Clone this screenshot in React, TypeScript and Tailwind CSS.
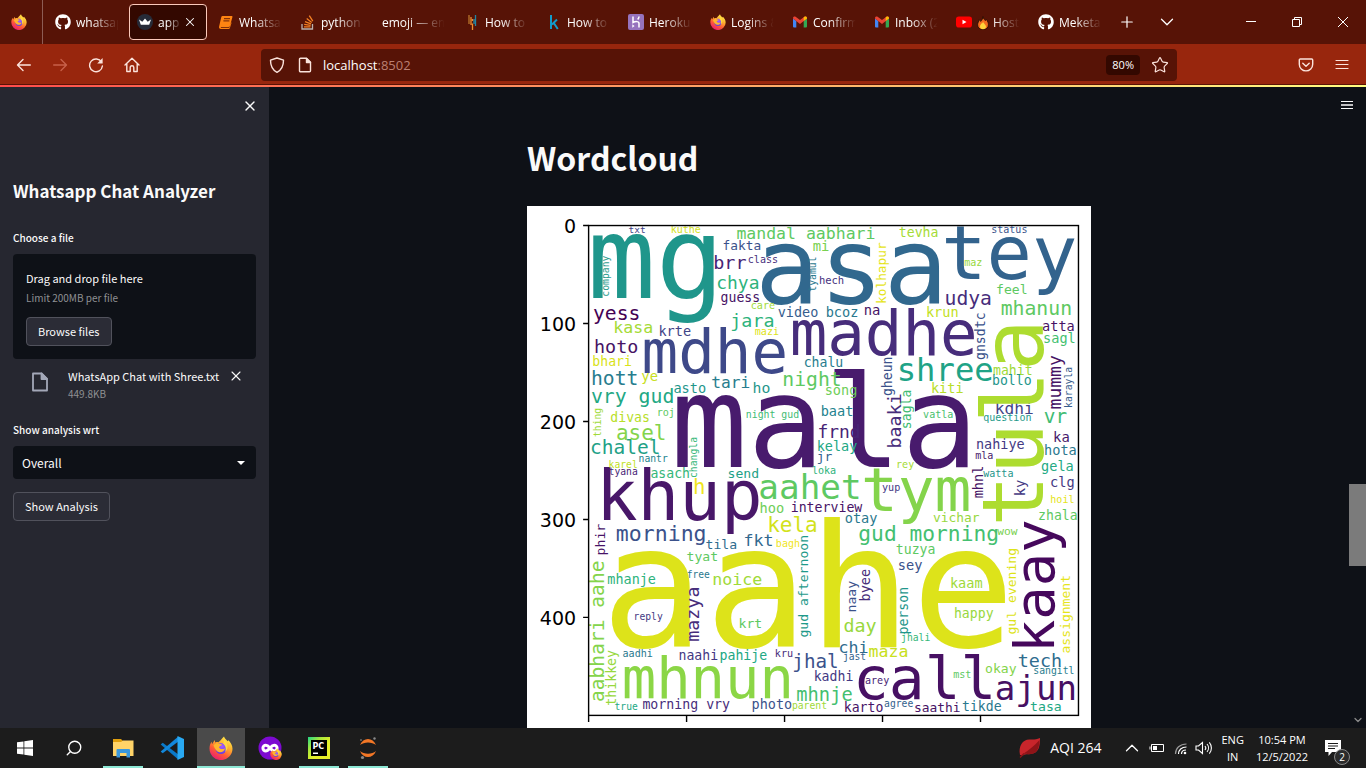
import type { ReactNode } from "react";
import { ChevronDown, ChevronUp, Plus, Search, Star, X } from "lucide-react";
import { FaGithub } from "react-icons/fa";

type Word = [text: string, x: number, y: number, length: number, color: string];

/* Horizontal words: left edge, baseline, drawn length. */
const acrossWords: Word[] = [
  ["aahe", 611, 646, 393, "#dde31a"],
  ["mala", 678, 467, 292, "#481b6d"],
  ["asa", 761, 303, 180, "#31688e"],
  ["mg", 594, 298, 123, "#1f968b"],
  ["tey", 945, 279, 127, "#33638d"],
  ["khup", 600, 519, 158, "#481769"],
  ["madhe", 793, 355, 180, "#472d7b"],
  ["mdhe", 645, 373, 139, "#3e4989"],
  ["tym", 864, 510, 103, "#84d44b"],
  ["mhnun", 625, 697, 165, "#8bd646"],
  ["call", 856, 698, 136, "#471063"],
  ["txt", 629, 233, 16, "#414487"],
  ["kuthe", 671, 233, 29, "#d2e21b"],
  ["mandal aabhari", 737, 239, 137, "#5ec962"],
  ["fakta", 723, 250, 37, "#3b528b"],
  ["mi", 813, 251, 15, "#7ad151"],
  ["brr", 714, 269, 31, "#482475"],
  ["class", 748, 263, 29, "#472f7d"],
  ["chya", 717, 289, 41, "#2eb37c"],
  ["guess", 721, 302, 38, "#471365"],
  ["care", 751, 309, 23, "#a0da39"],
  ["hech", 819, 284, 24, "#46327e"],
  ["yess", 594, 320, 45, "#440154"],
  ["video", 778, 317, 39, "#365d8d"],
  ["bcoz", 826, 317, 31, "#2a788e"],
  ["jara", 731, 327, 42, "#2eb37c"],
  ["kasa", 614, 333, 38, "#a5db36"],
  ["krte", 659, 336, 31, "#414487"],
  ["mazi", 755, 335, 23, "#dde318"],
  ["hoto", 595, 353, 42, "#471365"],
  ["bhari", 593, 366, 38, "#d8e219"],
  ["tevha", 899, 237, 38, "#a5db36"],
  ["status", 991, 233, 35, "#3a548c"],
  ["maz", 964, 266, 17, "#98d83e"],
  ["na", 864, 315, 15, "#471365"],
  ["krun", 926, 317, 31, "#c2df23"],
  ["udya", 945, 305, 45, "#472d7b"],
  ["feel", 996, 294, 30, "#5ec962"],
  ["mhanun", 1001, 315, 69, "#5ec962"],
  ["atta", 1042, 331, 31, "#471365"],
  ["sagl", 1043, 343, 31, "#44bf70"],
  ["shree", 898, 381, 93, "#20a386"],
  ["mahit", 993, 375, 38, "#a0da39"],
  ["bollo", 992, 385, 38, "#1f968b"],
  ["chalu", 804, 367, 38, "#287d8e"],
  ["hott", 592, 385, 45, "#287d8e"],
  ["ye", 642, 381, 15, "#c8e020"],
  ["tari", 712, 388, 37, "#287d8e"],
  ["night", 783, 386, 57, "#5ec962"],
  ["kiti", 931, 393, 31, "#b8de29"],
  ["kdhi", 995, 414, 37, "#414487"],
  ["question", 983, 421, 47, "#1f9a8a"],
  ["vr", 1044, 423, 21, "#3fbc73"],
  ["ka", 1053, 442, 15, "#481a6c"],
  ["hota", 1044, 455, 31, "#2a788e"],
  ["nahiye", 976, 449, 47, "#443983"],
  ["mla", 975, 459, 17, "#481a6c"],
  ["watta", 983, 477, 29, "#1f968b"],
  ["gela", 1041, 471, 31, "#24aa83"],
  ["clg", 1050, 487, 23, "#443983"],
  ["hoil", 1050, 502, 23, "#e5e419"],
  ["zhala", 1038, 519, 38, "#5ec962"],
  ["song", 825, 395, 31, "#6ece58"],
  ["baat", 821, 416, 31, "#25838e"],
  ["frnd", 818, 438, 41, "#482475"],
  ["kelay", 817, 451, 39, "#22a884"],
  ["jr", 817, 461, 14, "#33638d"],
  ["loka", 812, 474, 23, "#2eb37c"],
  ["vatla", 923, 418, 29, "#4ac16d"],
  ["rey", 896, 468, 17, "#a5db36"],
  ["yup", 882, 491, 17, "#443983"],
  ["aahet", 760, 498, 99, "#5ec962"],
  ["interview", 791, 511, 70, "#481467"],
  ["hoo", 760, 512, 23, "#6ece58"],
  ["otay", 845, 522, 31, "#2a788e"],
  ["vichar", 933, 521, 45, "#98d83e"],
  ["gud morning", 859, 540, 138, "#44bf70"],
  ["wow", 997, 534, 19, "#7ad151"],
  ["tuzya", 896, 553, 38, "#5ec962"],
  ["kela", 768, 531, 48, "#d2e21b"],
  ["fkt", 744, 545, 28, "#31688e"],
  ["bagh", 776, 546, 23, "#f0e51d"],
  ["tila", 706, 548, 30, "#2f6c8e"],
  ["morning", 617, 540, 88, "#3b528b"],
  ["asach", 651, 478, 38, "#35b779"],
  ["h", 694, 494, 10, "#f0e51d"],
  ["send", 728, 478, 30, "#1fa187"],
  ["karel", 609, 468, 28, "#c0df25"],
  ["tyana", 609, 475, 28, "#482475"],
  ["nantr", 639, 462, 28, "#25838e"],
  ["chalel", 591, 454, 68, "#1fa187"],
  ["asel", 617, 440, 48, "#84d44b"],
  ["divas", 611, 422, 38, "#b8de29"],
  ["roj", 657, 416, 17, "#5ec962"],
  ["vry gud", 592, 403, 81, "#22a884"],
  ["asto", 674, 393, 31, "#1f968b"],
  ["ho", 753, 393, 16, "#1f968b"],
  ["night gud", 746, 418, 52, "#3fbc73"],
  ["tyat", 687, 560, 30, "#5ec962"],
  ["mhanje", 608, 583, 47, "#2eb37c"],
  ["free", 687, 577, 22, "#2a788e"],
  ["noice", 713, 584, 48, "#a0da39"],
  ["krt", 739, 627, 22, "#5ec962"],
  ["reply", 634, 619, 28, "#443983"],
  ["aadhi", 623, 656, 29, "#2a788e"],
  ["naahi", 679, 659, 38, "#443983"],
  ["pahije", 720, 659, 46, "#22a884"],
  ["kru", 775, 656, 17, "#472d7b"],
  ["jhal", 793, 667, 44, "#3b528b"],
  ["kadhi", 814, 680, 38, "#443983"],
  ["mhnje", 797, 700, 54, "#44bf70"],
  ["true", 615, 709, 22, "#22a884"],
  ["morning vry", 643, 708, 86, "#472d7b"],
  ["photo", 752, 708, 39, "#3b528b"],
  ["parent", 792, 708, 34, "#a0da39"],
  ["sey", 898, 569, 23, "#3b528b"],
  ["jhali", 901, 640, 28, "#35b779"],
  ["kaam", 950, 587, 31, "#a0da39"],
  ["happy", 954, 617, 38, "#98d83e"],
  ["day", 844, 631, 31, "#98d83e"],
  ["chi", 839, 652, 28, "#2f6c8e"],
  ["jast", 843, 659, 22, "#33638d"],
  ["maza", 869, 656, 38, "#c8e020"],
  ["arey", 865, 683, 23, "#482475"],
  ["mst", 953, 677, 17, "#5ec962"],
  ["okay", 985, 672, 30, "#84d44b"],
  ["tech", 1018, 666, 42, "#2f6c8e"],
  ["sangitl", 1033, 673, 40, "#287d8e"],
  ["ajun", 996, 699, 78, "#471063"],
  ["tasa", 1030, 710, 30, "#22a884"],
  ["tikde", 962, 710, 38, "#2a788e"],
  ["saathi", 914, 711, 45, "#471365"],
  ["agree", 884, 706, 28, "#33638d"],
  ["karto", 844, 711, 38, "#481467"],
];

/* Words that read upwards: baseline x, lower end, drawn length. */
const upwardWords: Word[] = [
  ["tula", 1042, 521, 197, "#addc30"],
  ["kaay", 1053, 649, 127, "#46085c"],
  ["company", 609, 296, 40, "#2c9c8e"],
  ["tyamul", 815, 291, 34, "#2a788e"],
  ["kolhapur", 885, 303, 60, "#e5e419"],
  ["gnsdtc", 984, 359, 46, "#3b528b"],
  ["mummy", 1060, 408, 52, "#471365"],
  ["karayla", 1071, 407, 40, "#365d8d"],
  ["gheun", 891, 395, 38, "#3b528b"],
  ["mhnl", 982, 497, 31, "#471365"],
  ["ky", 1024, 495, 15, "#443983"],
  ["sagla", 910, 428, 38, "#3fbc73"],
  ["baaki", 900, 447, 53, "#472d7b"],
  ["changla", 697, 477, 40, "#35b779"],
  ["thing", 601, 436, 28, "#a0da39"],
  ["phir", 605, 554, 30, "#481467"],
  ["mazya", 699, 640, 53, "#472d7b"],
  ["gud afternoon", 808, 636, 101, "#1f9a8a"],
  ["aabhari aahe", 604, 700, 139, "#84d44b"],
  ["thikkey", 616, 704, 54, "#98d83e"],
  ["naay", 855, 611, 30, "#3b528b"],
  ["byee", 869, 600, 31, "#472d7b"],
  ["person", 907, 633, 46, "#1f968b"],
  ["gul evening", 1015, 633, 85, "#dde318"],
  ["assignment", 1069, 652, 77, "#e5e419"],
];

const sizeOf = (text: string, length: number) => length / (0.602 * text.length - 0.12);

function WordcloudFigure() {
  const ticks = [0, 100, 200, 300, 400];
  return (
    <svg
      viewBox="527 206 563 560"
      role="img"
      aria-label="Wordcloud of the chat"
      className="block w-full bg-white"
    >
      {acrossWords.map(([text, x, y, length, color]) => {
        const size = sizeOf(text, length);
        return (
          <text key={text} x={x - size * 0.06} y={y} fontSize={size} fill={color} fontFamily="DejaVu Sans Mono, monospace">
            {text}
          </text>
        );
      })}
      {upwardWords.map(([text, x, y, length, color]) => {
        const size = sizeOf(text, length);
        return (
          <text key={text} transform={`translate(${x} ${y + size * 0.06}) rotate(-90)`} fontSize={size} fill={color} fontFamily="DejaVu Sans Mono, monospace">
            {text}
          </text>
        );
      })}
      <rect x="588.5" y="225.5" width="489" height="489" fill="none" stroke="#000" strokeWidth="1.4" />
      {ticks.map((t) => {
        const at = t * 0.978;
        return (
          <g key={t} stroke="#000" strokeWidth="1.4">
            <path d={`M583 ${225.5 + at}h5.5M${588.5 + at} 715v6`} />
            <text x="576" y={233 + at} textAnchor="end" fontSize="19" stroke="none" fontFamily="DejaVu Sans, sans-serif">
              {t}
            </text>
          </g>
        );
      })}
    </svg>
  );
}

function FirefoxIcon({ className = "size-4" }: { className?: string }) {
  return (
    <svg viewBox="0 0 24 24" className={className} aria-hidden="true">
      <defs>
        <linearGradient id="fxFlame" x1=".8" y1="0" x2=".2" y2="1">
          <stop offset="0" stopColor="#fff44f" />
          <stop offset=".35" stopColor="#ffb02e" />
          <stop offset=".65" stopColor="#ff5a36" />
          <stop offset="1" stopColor="#e6127d" />
        </linearGradient>
        <radialGradient id="fxGlobe" cx=".6" cy=".3" r=".8">
          <stop offset="0" stopColor="#a35bff" />
          <stop offset="1" stopColor="#5b3bd6" />
        </radialGradient>
      </defs>
      <path fill="url(#fxFlame)" d="M15 .5c.5 2 2.200 3 3.700 4.800l.8-1c2 2 4 5.200 4 8.400A11.500 11.500 0 1 1 .5 12.500c0-3 .9-5 2.200-6.700L3 8.200 5.700 4l.5 2.600c1-.5 2-.6 3.200-.4C11 5.500 12.500 3 15 .5z" />
      <circle cx="12" cy="12.500" r="5.500" fill="url(#fxGlobe)" />
      <path fill="#ffb62e" d="M4.500 9.500C6 7 9 7 10.500 7.800 12 8 13 8.500 13 9c-1 1-2.500 1-3 2 .5 2.500 4 2.500 6 1.200-.5 3-3 4.300-5.500 4-3-.4-4.500-3-6-6.700z" />
      <path fill="#ffd83f" d="M15 3c2 2.500 3.500 4.500 3.500 8 0 2-.8 3.700-2.300 5 1-3 .8-6-2.200-8.500 1-1 1.300-3 1-4.500z" />
    </svg>
  );
}

function CrownIcon() {
  return (
    <svg viewBox="0 0 16 16" className="size-4" aria-hidden="true">
      <circle cx="8" cy="8" r="8" fill="#262b38" />
      <path fill="#fff" d="M2 5.500l3.300 2.200L8 4.500l2.700 3.200L14 5.500l-1.800 5.300H3.800z" />
    </svg>
  );
}

function BookIcon() {
  return (
    <svg viewBox="0 0 16 16" className="size-4" aria-hidden="true">
      <path fill="#ff8412" d="M4.500 2h9c.8 0 1.100.5.9 1.200l-2.400 8.600c-.2.700-.7 1.200-1.400 1.200H3.300c-.6 0-.7.800 0 .8h8L13 9l.8-1-2 6.300c-.2.500-.6.700-1.100.7H3c-1.500 0-2.300-1-1.900-2.400L3.300 3c.2-.6.600-1 1.200-1z" />
      <path stroke="#571306" strokeWidth=".9" d="M6 4.700h6M5.400 6.900h6" />
    </svg>
  );
}

function StackIcon() {
  return (
    <svg viewBox="0 0 16 16" className="size-4" fill="none" strokeWidth="1.300" aria-hidden="true">
      <path stroke="#b9b3ae" d="M2 10v5h10.500v-5" />
      <path stroke="#f48024" d="M4 12.800h6.500M4.200 10.400l6.400 1M5 7.700l6 2.200M6.700 4.600l5 4M9.300 1.600l3.500 5.600" />
    </svg>
  );
}

function BarsIcon() {
  return (
    <svg viewBox="0 0 16 16" className="size-4" strokeWidth="1.300" aria-hidden="true">
      <path stroke="#b9752a" d="M5 1v9" />
      <path stroke="#f08c2e" d="M7 3v8M8.500 5v2M8.500 9.500V16" />
      <path stroke="#2387a5" d="M11.500 1v11M10 5v5" />
    </svg>
  );
}

function KaggleIcon() {
  return (
    <svg viewBox="0 0 16 16" className="size-4" fill="none" stroke="#139bca" strokeWidth="2" aria-hidden="true">
      <path d="M5 1v14M11 5.500L6 10.500M7.800 9l4 6" />
    </svg>
  );
}

function HerokuIcon() {
  return (
    <svg viewBox="0 0 16 16" className="size-4" fill="none" aria-hidden="true">
      <rect width="16" height="16" rx="2" fill="#9673bd" />
      <path stroke="#fff" strokeWidth="1.500" d="M5 2.500v6c2-1 6-1.600 6 .8v4.200M11 2.500c0 1.300-.5 2-1.300 3" />
      <path fill="#fff" d="M4.300 10.300L6.600 12l-2.300 1.800z" />
    </svg>
  );
}

function GmailIcon() {
  return (
    <svg viewBox="0 0 16 16" className="size-4" aria-hidden="true">
      <path fill="#4285f4" d="M1 4.500l3.300 2.500v6.500H2a1 1 0 0 1-1-1z" />
      <path fill="#34a853" d="M11.700 7L15 4.500v8a1 1 0 0 1-1 1h-2.300z" />
      <path fill="#ea4335" d="M1 4c0-1.500 1.600-2 2.600-1.200L8 6.100l4.400-3.300C13.400 2 15 2.500 15 4v.6L8 9.900 1 4.600z" />
      <path fill="#fbbc04" d="M11.700 3.300l.7-.5C13.400 2 15 2.500 15 4v.6L11.700 7z" />
    </svg>
  );
}

function YoutubeIcon() {
  return (
    <svg viewBox="0 0 16 16" className="size-4" aria-hidden="true">
      <rect y="2.500" width="16" height="11" rx="2.800" fill="#f00" />
      <path fill="#fff" d="M6.500 5.700L10.500 8l-4 2.300z" />
    </svg>
  );
}

function FlameIcon() {
  return (
    <svg viewBox="0 0 12 14" className="h-3.5 w-3 shrink-0" aria-hidden="true">
      <path fill="#f36c1e" stroke="#1c0a02" strokeWidth=".8" d="M6 .6c.2 2 1.300 2.700 2.300 4L9.400 3.500c1.500 2 2 3.500 2 5.300 0 3-2.400 4.800-5.400 4.800S.6 11.800.6 8.800C.6 6.500 2 5.800 2 3.600c1 .4 1.400 1 1.700 1.800C5 4.200 5.800 2.600 6 .6z" />
      <path fill="#ffd43a" d="M6 5.500c.2 2 3 3 3 5 0 1.700-1.300 2.700-3 2.700s-3-1-3-2.700c0-1.600 1-1.700 1.200-3 .8.300 1.600-.8 1.800-2z" />
    </svg>
  );
}

const github = <FaGithub className="size-4 text-white" />;

const tabs: { icon?: ReactNode; title: string; flame?: boolean; active?: boolean }[] = [
  { icon: github, title: "whatsapp" },
  { icon: <CrownIcon />, title: "app · Streamlit", active: true },
  { icon: <BookIcon />, title: "Whatsapp" },
  { icon: <StackIcon />, title: "python -" },
  { title: "emoji — emoji" },
  { icon: <BarsIcon />, title: "How to" },
  { icon: <KaggleIcon />, title: "How to" },
  { icon: <HerokuIcon />, title: "Heroku" },
  { icon: <FirefoxIcon />, title: "Logins &" },
  { icon: <GmailIcon />, title: "Confirm" },
  { icon: <GmailIcon />, title: "Inbox (2" },
  { icon: <YoutubeIcon />, title: "Host", flame: true },
  { icon: github, title: "Meketa" },
];

function TabStrip() {
  return (
    <header className="flex h-11 shrink-0 items-center bg-[#571306] text-white">
      <button aria-label="Firefox" className="mr-1 flex h-11 w-[43px] shrink-0 items-center justify-center border-r border-[#8d5c54] pr-1">
        <FirefoxIcon />
      </button>
      <nav className="flex" aria-label="Open tabs">
        {tabs.map((tab, i) => (
          <div
            key={i}
            className={
              tab.active
                ? "mr-[3px] flex h-9 w-[78px] shrink-0 items-center rounded border border-[#fbc9bb] bg-[#330800] pr-[9px] pl-[7px]"
                : "flex h-9 w-[82px] shrink-0 items-center px-2"
            }
          >
            {tab.icon && <span className="mr-[5px] shrink-0">{tab.icon}</span>}
            <a
              href="#"
              className="flex min-w-0 flex-1 items-center gap-1 overflow-hidden pt-px text-xs leading-4 whitespace-nowrap [mask-image:linear-gradient(to_right,black_35%,transparent_95%)]"
            >
              {tab.flame && <FlameIcon />}
              {tab.title}
            </a>
            {tab.active && (
              <button aria-label="Close tab">
                <X className="size-3.5" strokeWidth={1.8} />
              </button>
            )}
          </div>
        ))}
      </nav>
      <button aria-label="New tab" className="ml-[6px]">
        <Plus className="size-[18px]" strokeWidth={1.6} />
      </button>
      <button aria-label="List all tabs" className="ml-5">
        <ChevronDown className="size-[22px]" strokeWidth={1.4} />
      </button>
      <div className="ml-auto flex">
        <button aria-label="Minimise" className="flex w-[46px] justify-center">
          <svg viewBox="0 0 16 16" className="size-4" stroke="currentColor" aria-hidden="true">
            <path d="M3 7.500h10" />
          </svg>
        </button>
        <button aria-label="Restore" className="flex w-[46px] justify-center">
          <svg viewBox="0 0 16 16" className="size-4" fill="none" stroke="currentColor" aria-hidden="true">
            <path d="M3.500 5.500h7v7h-7zM5.500 5.500v-2h7v7h-2" />
          </svg>
        </button>
        <button aria-label="Close" className="flex w-[46px] justify-center">
          <svg viewBox="0 0 16 16" className="size-4" stroke="currentColor" aria-hidden="true">
            <path d="M3 3l10 10M13 3L3 13" />
          </svg>
        </button>
      </div>
    </header>
  );
}

function Glyph({ children, className = "size-4" }: { children: ReactNode; className?: string }) {
  return (
    <svg
      viewBox="0 0 16 16"
      className={className}
      fill="none"
      stroke="currentColor"
      strokeWidth="1.400"
      strokeLinecap="round"
      strokeLinejoin="round"
      aria-hidden="true"
    >
      {children}
    </svg>
  );
}

function Toolbar() {
  return (
    <div className="flex h-10 shrink-0 items-center bg-[#98260d] px-4 pt-px text-[#fbe3dc]">
      <div className="flex gap-5">
        <button aria-label="Back">
          <Glyph>
            <path d="M14.300 8H1.700M7 2.500L1.500 8 7 13.500" />
          </Glyph>
        </button>
        <button aria-label="Forward" className="text-[#c7604a]">
          <Glyph>
            <path d="M1.700 8h12.600M9 2.500L14.500 8 9 13.500" />
          </Glyph>
        </button>
        <button aria-label="Reload">
          <Glyph>
            <path d="M13.500 5A6.400 6.400 0 1 0 14.400 9" />
            <path d="M14.600 1v5.500H9.200z" fill="currentColor" stroke="none" />
          </Glyph>
        </button>
        <button aria-label="Home">
          <Glyph>
            <path d="M1 8l7-6.700L15 8M2.800 6.800v7.700h3.400v-4a1.800 1.800 0 0 1 3.600 0v4h3.400V6.800" />
          </Glyph>
        </button>
      </div>
      <div className="mr-[121px] ml-[121px] flex h-8 min-w-0 flex-1 items-center rounded bg-[#571306] px-2">
        <Glyph>
          <path d="M8 1l6.500 2.200C14.500 9 12.500 13 8 15.300 3.500 13 1.500 9 1.500 3.200z" />
        </Glyph>
        <Glyph className="ml-3 size-4">
          <path d="M2.500 2.300a1 1 0 0 1 1-1H9.500l4 4v8.400a1 1 0 0 1-1 1h-9a1 1 0 0 1-1-1z" />
          <path d="M9.500 1.500v4h4z" fill="currentColor" />
        </Glyph>
        <label htmlFor="address" className="sr-only">Address</label>
        <div className="relative ml-2.5 min-w-0 flex-1 text-[13px] leading-5">
          <input id="address" defaultValue="localhost:8502" className="w-full bg-transparent text-transparent outline-none" />
          <span aria-hidden="true" className="pointer-events-none absolute inset-0 text-white">
            localhost<span className="text-[#bb8073]">:8502</span>
          </span>
        </div>
        <button className="rounded bg-[#330800] px-[6px] text-[11px] leading-5 text-white">80%</button>
        <button aria-label="Bookmark" className="ml-[11px]">
          <Star className="size-[18px]" strokeWidth={1.6} />
        </button>
      </div>
      <button aria-label="Save to Pocket">
        <Glyph>
          <path d="M2.300 2h11.400a1 1 0 0 1 1 1v4.200a6.700 6.700 0 0 1-13.400 0V3a1 1 0 0 1 1-1zM4.800 6.200L8 9.300l3.200-3.100" />
        </Glyph>
      </button>
      <button aria-label="Application menu" className="ml-5">
        <Glyph>
          <path d="M2 3.500h12M2 7.500h12M2 11.500h12" strokeWidth="1.200" />
        </Glyph>
      </button>
    </div>
  );
}

function Sidebar() {
  return (
    <aside className="flex w-[269px] shrink-0 flex-col bg-[#262730] px-[13px] text-[#fafafa]">
      <button aria-label="Close sidebar" className="-mr-[2px] mt-[11px] self-end">
        <X className="size-4" strokeWidth={2} />
      </button>
      <h1 className="mt-[65px] text-[17px] leading-6 font-bold">Whatsapp Chat Analyzer</h1>
      <label htmlFor="chat-file" className="mt-[27px] text-[10px] leading-4 font-medium">Choose a file</label>
      <section className="mt-2 rounded bg-[#0e1117] p-[13px]">
        <p className="text-[11px] leading-[22px]">Drag and drop file here</p>
        <p className="text-[10px] leading-[18px] text-[#8f9093]">Limit 200MB per file</p>
        <input id="chat-file" type="file" className="hidden" />
        <button className="mt-[10px] block rounded border border-[#51525c] bg-[#2b2c36] px-[11px] text-[11px] leading-[27px]">Browse files</button>
      </section>
      <div className="mt-[7px] flex">
        <svg viewBox="0 0 20 20" className="mt-[6px] ml-[17px] size-5" fill="none" stroke="#a3a8b8" strokeWidth="1.800" strokeLinejoin="round" aria-hidden="true">
          <path d="M3 1.500h8.500l5.500 5.500v11.500H3z" />
          <path d="M11.500 1.500V7H17z" fill="#a3a8b8" />
        </svg>
        <div className="ml-[18px] w-[157px]">
          <p className="text-[11px] leading-5 whitespace-nowrap">WhatsApp Chat with Shree.txt</p>
          <p className="text-[10px] leading-4 text-[#8f9093]">449.8KB</p>
        </div>
        <button aria-label="Remove file" className="ml-[3px] flex h-5 items-center">
          <X className="size-4" strokeWidth={1.6} />
        </button>
      </div>
      <label htmlFor="analysis" className="mt-5 text-[10px] leading-4 font-medium">Show analysis wrt</label>
      <div className="relative mt-2">
        <select id="analysis" className="h-[33px] w-full appearance-none rounded bg-[#0e1117] px-[9px] text-[12px] leading-5">
          <option>Overall</option>
        </select>
        <svg viewBox="0 0 8 4" className="pointer-events-none absolute top-[15px] right-[11px] h-1 w-2" aria-hidden="true">
          <path fill="#fff" d="M0 0h8L4 4z" />
        </svg>
      </div>
      <button className="mt-[13px] self-start rounded border border-[#51525c] bg-[#2b2c36] px-[11px] text-[11px] leading-[27px]">Show Analysis</button>
    </aside>
  );
}

function TaskButton({ label, running, active, children }: { label: string; running?: boolean; active?: boolean; children: ReactNode }) {
  return (
    <button
      aria-label={label}
      className={active ? "relative flex h-10 w-12 items-center justify-center bg-[#4a4a4a]" : "relative flex h-10 w-12 items-center justify-center"}
    >
      {children}
      {running && <span className={active ? "absolute bottom-0 h-[2px] w-12 bg-[#8de8d5]" : "absolute bottom-0 h-[2px] w-10 bg-[#8de8d5]"} />}
    </button>
  );
}

function Taskbar() {
  return (
    <footer className="flex h-10 shrink-0 items-center bg-[#1c1c1c] text-xs leading-4 text-white">
      <div className="flex gap-px pl-px">
        <TaskButton label="Start">
          <svg viewBox="0 0 16 16" className="size-4" fill="#fff" aria-hidden="true">
            <path d="M0 2.300l6.500-.9v6.200H0zM7.300 1.300L16 0v7.600H7.300zM0 8.400h6.500v6.200L0 13.700zM7.300 8.400H16V16l-8.700-1.300z" />
          </svg>
        </TaskButton>
        <TaskButton label="Search">
          <Search className="size-[18px] -scale-x-100" strokeWidth={1.8} />
        </TaskButton>
        <TaskButton label="File Explorer" running>
          <svg viewBox="0 0 24 24" className="size-6" aria-hidden="true">
            <path fill="#e09f0e" d="M2 3h8l2 2v3H2z" />
            <path fill="#ffd368" d="M2 6l8 0 2-1.500h10.500V20H2z" />
            <path fill="#3b98dc" d="M5.500 14a1 1 0 0 1 1-1h11.500a1 1 0 0 1 1 1v7.500h-3.500V17H9v4.500H5.500z" />
          </svg>
        </TaskButton>
        <TaskButton label="Visual Studio Code">
          <svg viewBox="0 0 24 24" className="size-6" aria-hidden="true">
            <path fill="#0a79c8" d="M.7 8.500L2.700 6.800 18 18.300v5z" />
            <path fill="#1288dc" d="M.7 15.500L2.700 17.200 18 5.700v-5z" />
            <path fill="#29a9f2" d="M17.500 0L24 3v18l-6.500 3z" />
          </svg>
        </TaskButton>
        <TaskButton label="Firefox" running active>
          <FirefoxIcon className="size-6" />
        </TaskButton>
        <TaskButton label="Firefox Private Browsing">
          <span className="relative">
            <svg viewBox="0 0 24 24" className="size-6" aria-hidden="true">
              <circle cx="12" cy="12" r="11.500" fill="#7d0ad1" />
              <path fill="none" stroke="#fff" strokeWidth="3" d="M12 12c-2-2.300-3-2.800-4.200-2.800a2.900 2.900 0 0 0 0 5.800c1.200 0 2.200-.7 4.200-3s3-2.800 4.200-2.800a2.900 2.900 0 0 1 0 5.800c-1.200 0-2.200-.7-4.200-3z" />
            </svg>
            <span className="absolute right-0 bottom-0">
              <FirefoxIcon className="size-3" />
            </span>
          </span>
        </TaskButton>
        <TaskButton label="PyCharm" running>
          <svg viewBox="0 0 24 24" className="size-6" aria-hidden="true">
            <defs>
              <linearGradient id="pyc" x1="0" y1="0" x2=".6" y2=".6">
                <stop offset="0" stopColor="#21d789" />
                <stop offset=".5" stopColor="#a5e83c" />
                <stop offset="1" stopColor="#e6ee29" />
              </linearGradient>
            </defs>
            <rect x="1" y="1" width="22" height="22" fill="url(#pyc)" />
            <rect x="4" y="4" width="16" height="16" fill="#000" />
            <text x="5.500" y="12.500" fontSize="8" fontWeight="700" fill="#fff" fontFamily="DejaVu Sans, sans-serif">PC</text>
            <path fill="#fff" d="M6 16.500h5V18H6z" />
          </svg>
        </TaskButton>
        <TaskButton label="Jupyter" running>
          <svg viewBox="0 0 24 24" className="size-6" aria-hidden="true">
            <path fill="#f37726" d="M4 9c3-8 13-8 16 0-4-3.500-12-3.500-16 0zM4 15c3 8 13 8 16 0-4 3.500-12 3.500-16 0z" />
            <circle cx="18.500" cy="2.500" r="1.200" fill="#8a8a8a" />
            <circle cx="6.500" cy="21.500" r="1.600" fill="#8a8a8a" />
            <circle cx="5" cy="4" r=".9" fill="#6f6f6f" />
          </svg>
        </TaskButton>
      </div>
      <div className="ml-auto flex items-center">
        <button className="flex items-center gap-2 text-[14px]">
          <svg viewBox="0 0 24 24" className="size-6" aria-hidden="true">
            <path fill="#c8252b" d="M2 19C0 10 5 3 12 3.500c4 .3 6 0 10-1.500 0 8-1 15-9 16-4 .5-6-.5-8 1.500z" />
            <path fill="#8e1418" d="M5 18C11 14 16 10 21.500 4c-.3 7-1.500 13-8.500 14-4 .5-6-.5-8 0z" />
            <path fill="none" stroke="#8e1418" strokeWidth="1.500" d="M2 21.500l4-4" />
          </svg>
          AQI 264
        </button>
        <button aria-label="Show hidden icons" className="ml-5">
          <ChevronUp className="size-[22px]" strokeWidth={1.4} />
        </button>
        <svg viewBox="0 0 16 16" className="ml-1.5 size-4" fill="none" stroke="#fff" aria-hidden="true">
          <path d="M2.500 4.500h12v7h-12zM1 6.500v3" />
          <path d="M4 6h4v4H4z" fill="#fff" stroke="none" />
        </svg>
        <svg viewBox="0 0 16 16" className="ml-2 size-4" fill="none" stroke="#fff" strokeWidth="1.200" aria-hidden="true">
          <path d="M8.500 14c0-2 1.500-4 4.500-4M5.500 14c0-4 3-7 8-7" />
          <path stroke="#9a9a9a" d="M2.500 14C2.500 8 7 4 13.500 4" />
          <circle cx="12" cy="13" r="1.300" fill="#fff" stroke="none" />
        </svg>
        <svg viewBox="0 0 18 16" className="ml-1.5 h-4 w-[18px]" fill="none" stroke="#fff" strokeWidth="1.100" aria-hidden="true">
          <path d="M1 6h2.500L7.500 2.500v11L3.500 10H1zM10 6c1 1.200 1 2.800 0 4M12 4c2 2.300 2 5.700 0 8M14.300 2.300c2.800 3.300 2.800 8.100 0 11.400" />
        </svg>
        <div className="ml-2 text-center text-[11px] leading-[17px]">
          <p>ENG</p>
          <p>IN</p>
        </div>
        <div className="ml-3 text-center text-[11px] leading-[17px]">
          <p>10:54 PM</p>
          <p>12/5/2022</p>
        </div>
        <button aria-label="Notifications" className="relative mr-6 ml-4">
          <svg viewBox="0 0 18 18" className="size-[18px]" aria-hidden="true">
            <path fill="#fff" d="M1 1h16v12H8l-3.500 4v-4H1z" />
            <path stroke="#1c1c1c" d="M4 4.500h10M4 7h10M4 9.500h7" />
          </svg>
          <span className="absolute -right-2 -bottom-2 flex size-4 items-center justify-center rounded-full border border-[#8a8a8a] bg-[#2b2b2b] text-[10px]">2</span>
        </button>
      </div>
    </footer>
  );
}

export default function App() {
  return (
    <div className="flex h-screen flex-col overflow-hidden bg-[#0e1117] font-['Open_Sans',sans-serif]">
      <TabStrip />
      <Toolbar />
      <div className="h-[3px] shrink-0 border-t border-[#571306] bg-linear-to-r from-[#ff4b4b] via-[#ffa065] to-[#fffd80]" />
      <div className="relative flex min-h-0 flex-1 font-['Noto_Sans_CJK_SC',sans-serif]">
        <Sidebar />
        <main className="min-w-0 flex-1 overflow-hidden">
          <div className="mx-auto w-full max-w-[564px]">
            <h2 className="pt-12 pb-[27px] text-[32px] leading-[44px] font-bold text-[#fafafa]">Wordcloud</h2>
            <WordcloudFigure />
          </div>
        </main>
        <div className="flex w-[17px] shrink-0 flex-col justify-end" aria-hidden="true">
          <div className="h-[82px] bg-[#7b7b7b]" />
          <div className="flex h-[162px] items-end justify-center pb-0.5 text-[#8b8b8b]">
            <ChevronDown className="size-3" strokeWidth={2.5} />
          </div>
        </div>
        <button aria-label="Main menu" className="absolute top-[10px] right-[11px] text-[#fafafa]">
          <svg viewBox="0 0 16 16" className="size-4" stroke="currentColor" aria-hidden="true">
            <path d="M2 4.500h12M2 11.500h12" />
            <path d="M2 8h12" strokeWidth="2" opacity=".75" />
          </svg>
        </button>
      </div>
      <Taskbar />
    </div>
  );
}
